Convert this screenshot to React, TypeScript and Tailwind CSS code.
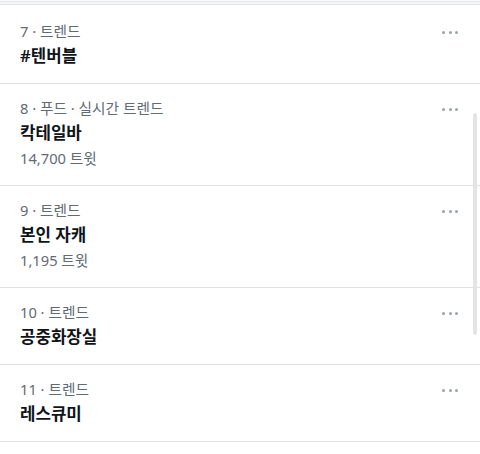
import React from "react";

type Trend = { label: string; title: string; count?: string };

const trends: Trend[] = [
  { label: "7 · 트렌드", title: "#텐버블" },
  { label: "8 · 푸드 · 실시간 트렌드", title: "칵테일바", count: "14,700 트윗" },
  { label: "9 · 트렌드", title: "본인 자캐", count: "1,195 트윗" },
  { label: "10 · 트렌드", title: "공중화장실" },
  { label: "11 · 트렌드", title: "레스큐미" },
];

const font = {
  fontFamily:
    '"Noto Sans", "Noto Sans CJK KR", "Liberation Sans", sans-serif',
};

function Dots() {
  return (
    <div className="flex items-center gap-[3.5px] pt-[1px]">
      <span className="block h-[3px] w-[3px] rounded-full bg-[#9ca3a9]" />
      <span className="block h-[3px] w-[3px] rounded-full bg-[#9ca3a9]" />
      <span className="block h-[3px] w-[3px] rounded-full bg-[#9ca3a9]" />
    </div>
  );
}

function Row({ t }: { t: Trend }) {
  return (
    <div className="flex justify-between border-b border-[#dfe2e4] pl-[20px] pr-[22px] pt-[14px] pb-[12px]">
      <div className="flex flex-col">
        <div className="h-[20px] text-[14.7px] leading-[20px] text-[#5f6b75]">
          {t.label}
        </div>
        <div className="h-[30px] text-[16.8px] font-semibold leading-[30px] text-[#0f1419]">
          {t.title}
        </div>
        {t.count && (
          <div className="h-[25px] pb-[5px] text-[14.7px] leading-[20px] text-[#5f6b75]">
            {t.count}
          </div>
        )}
      </div>
      <div className="pt-[9px]">
        <Dots />
      </div>
    </div>
  );
}

export default function App() {
  return (
    <div className="relative h-[454px] w-[480px] overflow-hidden bg-white" style={font}>
      <div className="h-[1px] bg-[#fafafa]" />
      <div className="h-[1px] bg-[#e3e5e7]" />
      <div className="h-[2px] bg-[#f4f5f6]" />
      <div className="h-[1px] bg-[#e3e5e7]" />
      <div className="h-[2px] bg-white" />
      {trends.map((t) => (
        <Row key={t.label} t={t} />
      ))}
      <div className="absolute right-[3px] top-[113px] h-[222px] w-[4px] rounded-full bg-[#e4e4e4]" />
    </div>
  );
}
